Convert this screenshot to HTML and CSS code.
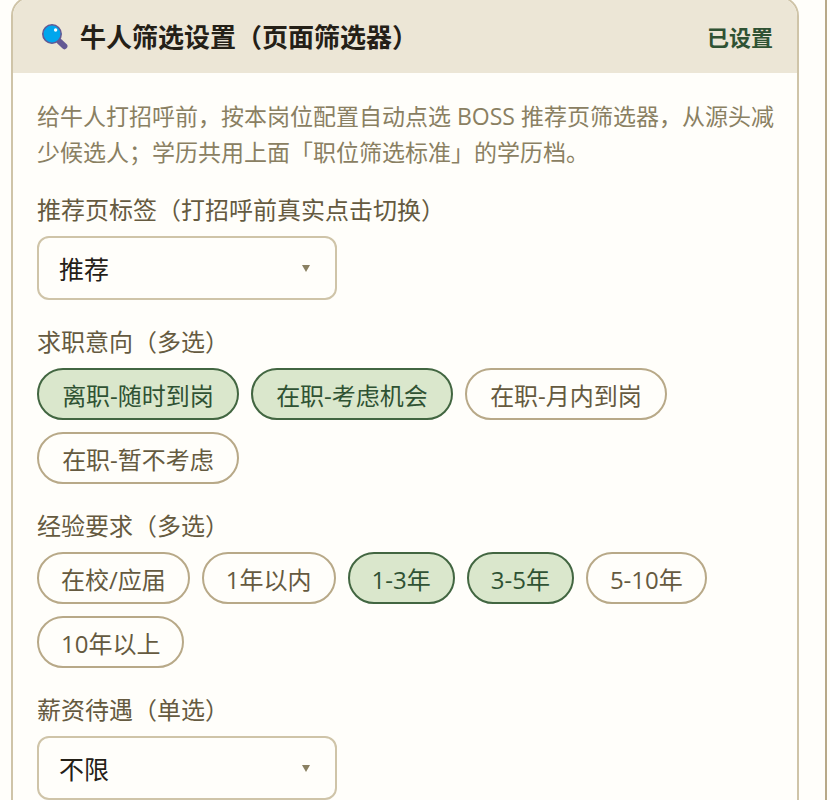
FILE: index.html
```
<!DOCTYPE html>
<html lang="zh-CN">
<head>
    <meta charset="UTF-8">
    <meta name="viewport" content="width=device-width, initial-scale=1.0">
    <title>牛人筛选设置</title>
    <link rel="stylesheet" href="styles.css">
</head>
<body>
    <main class="panel">
        <section class="card">
            <header class="card-header">
                <svg class="card-icon" viewBox="0 0 28 28" aria-hidden="true">
                    <path d="M18.6 18.6L23.4 23.2" stroke="#635994" stroke-width="6" stroke-linecap="round"/>
                    <circle cx="11" cy="11" r="9.2" fill="#00a6ed" stroke="#635994" stroke-width="1.6"/>
                    <circle cx="14.6" cy="7" r="1.7" fill="#fff"/>
                </svg>
                <h2 class="card-title">牛人筛选设置（页面筛选器）</h2>
                <span class="card-status">已设置</span>
            </header>

            <div class="card-body">
                <p class="hint">给牛人打招呼前，按本岗位配置自动点选 BOSS 推荐页筛选器，从源头减少候选人；学历共用上面「职位筛选标准」的学历档。</p>

                <div class="field">
                    <label class="field-label" for="tab">推荐页标签（打招呼前真实点击切换）</label>
                    <div class="select">
                        <select id="tab">
                            <option>推荐</option>
                        </select>
                        <svg class="arrow" viewBox="0 0 8 7" aria-hidden="true"><path d="M0 0H8L4 7Z"/></svg>
                    </div>
                </div>

                <div class="field" role="group" aria-labelledby="intent">
                    <span class="field-label" id="intent">求职意向（多选）</span>
                    <div class="chips chips-wide">
                        <button type="button" class="chip" aria-pressed="true">离职-随时到岗</button>
                        <button type="button" class="chip" aria-pressed="true">在职-考虑机会</button>
                        <button type="button" class="chip" aria-pressed="false">在职-月内到岗</button>
                        <button type="button" class="chip" aria-pressed="false">在职-暂不考虑</button>
                    </div>
                </div>

                <div class="field" role="group" aria-labelledby="exp">
                    <span class="field-label" id="exp">经验要求（多选）</span>
                    <div class="chips">
                        <button type="button" class="chip" aria-pressed="false">在校/应届</button>
                        <button type="button" class="chip" aria-pressed="false">1年以内</button>
                        <button type="button" class="chip" aria-pressed="true">1-3年</button>
                        <button type="button" class="chip" aria-pressed="true">3-5年</button>
                        <button type="button" class="chip" aria-pressed="false">5-10年</button>
                        <button type="button" class="chip" aria-pressed="false">10年以上</button>
                    </div>
                </div>

                <div class="field">
                    <label class="field-label" for="salary">薪资待遇（单选）</label>
                    <div class="select">
                        <select id="salary">
                            <option>不限</option>
                        </select>
                        <svg class="arrow" viewBox="0 0 8 7" aria-hidden="true"><path d="M0 0H8L4 7Z"/></svg>
                    </div>
                </div>
            </div>
        </section>
    </main>

    <script>
        document.querySelectorAll('.chip').forEach(chip => {
            chip.addEventListener('click', () => {
                const on = chip.getAttribute('aria-pressed') === 'true';
                chip.setAttribute('aria-pressed', String(!on));
            });
        });
    </script>
</body>
</html>
```
FILE: styles.css
```
* {
    box-sizing: border-box;
}

body {
    margin: 0;
    height: 100vh;
    overflow: hidden;
    background: #fffefa;
    color: #242017;
    font-family: "Open Sans", "Noto Sans CJK SC", sans-serif;
}

.panel {
    margin: -4px 3px 0 0;
    padding: 0 26px 0 11px;
    border-right: 2px solid #b8a988;
}

.card {
    border: 2px solid #cfc4a8;
    border-radius: 20px;
    overflow: hidden;
}

.card-header {
    display: flex;
    align-items: center;
    gap: 11px;
    padding: 21px 24px 18px 28px;
    background: #ece6d6;
}

.card-icon {
    width: 28px;
    height: 28px;
    fill: none;
}

.card-title {
    flex: 1;
    margin: 0;
    font-size: 26px;
    line-height: 36px;
    font-weight: 700;
}

.card-status {
    color: #2f5233;
    font-size: 22px;
    line-height: 36px;
    font-weight: 700;
}

.card-body {
    padding: 25px 20px 25px 24px;
}

.hint {
    margin: 0 0 22px;
    color: #8a8062;
    font-size: 23px;
    line-height: 36px;
}

.field {
    display: flex;
    flex-direction: column;
    gap: 8px;
}

.field + .field {
    margin-top: 24px;
}

.field-label {
    color: #655a40;
    font-size: 24px;
    line-height: 36px;
}

.select {
    display: grid;
    align-items: center;
    width: 300px;
}

.select select,
.arrow {
    grid-area: 1 / 1;
}

.select select {
    appearance: none;
    height: 64px;
    padding: 2px 48px 0 20px;
    border: 2px solid #cfc4a8;
    border-radius: 12px;
    background: #fffefa;
    color: #242017;
    font-family: inherit;
    font-size: 25px;
}

.arrow {
    justify-self: end;
    width: 8px;
    height: 7px;
    margin-right: 27px;
    fill: #8a8062;
    pointer-events: none;
}

.chips {
    display: flex;
    flex-wrap: wrap;
    gap: 12px;
}

.chip {
    height: 52px;
    padding: 3px 22px 0;
    border: 2px solid #b8a988;
    border-radius: 26px;
    background: #fffefa;
    color: #655a40;
    font-family: inherit;
    font-size: 24px;
    line-height: 36px;
    cursor: pointer;
}

.chips-wide .chip {
    min-width: 202px;
}

.chip[aria-pressed="true"] {
    border-color: #426641;
    background: #dae7cc;
    color: #2f5233;
}
```
